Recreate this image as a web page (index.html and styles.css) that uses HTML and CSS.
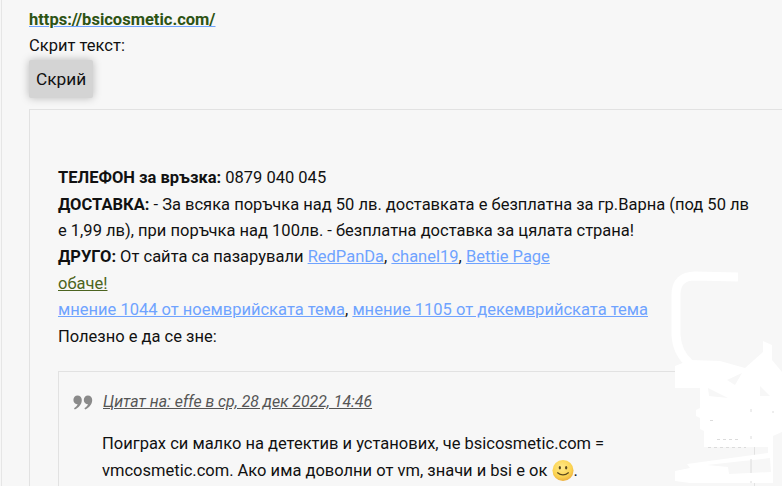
FILE: index.html
```html
<!DOCTYPE html>
<html lang="bg">
<head>
    <meta charset="UTF-8">
    <meta name="viewport" content="width=device-width, initial-scale=1.0">
    <title>Скрит текст</title>
    <link rel="stylesheet" href="styles.css">
</head>
<body>
    <div class="post">
        <a class="site-link" href="#"><b>https://bsicosmetic.com/</b></a>
        <div>Скрит текст:</div>
        <button class="spoiler-btn" type="button">Скрий</button>

        <div class="spoiler">
            <br>
            <b>ТЕЛЕФОН за връзка:</b> 0879 040 045<br>
            <b>ДОСТАВКА:</b> - За всяка поръчка над 50 лв. доставката е безплатна за гр.Варна (под 50 лв е 1,99 лв), при поръчка над 100лв. - безплатна доставка за цялата страна!<br>
            <b>ДРУГО:</b> От сайта са пазарували <a href="#">RedPanDa</a>, <a href="#">chanel19</a>, <a href="#">Bettie Page</a><br>
            <a class="olive-link" href="#">обаче!</a><br>
            <a href="#">мнение 1044 от ноемврийската тема</a>, <a href="#">мнение 1105 от декемврийската тема</a><br>
            Полезно е да се зне:

            <blockquote class="quote">
                <div class="quote-head">
                    <svg class="quote-icon" width="20" height="15" viewBox="0 0 20 15">
                        <path d="M4.5 0.5C7 0.5 8.8 2.4 8.8 5C8.8 9 6 12.8 1.8 14.5L1 13.2C3 12 4.2 10.6 4.6 9.2C2.2 9.2 0.4 7.4 0.4 4.9C0.4 2.4 2.2 0.5 4.5 0.5Z"/>
                        <path d="M14.9 0.5C17.4 0.5 19.2 2.4 19.2 5C19.2 9 16.4 12.8 12.2 14.5L11.4 13.2C13.4 12 14.6 10.6 15 9.2C12.6 9.2 10.8 7.4 10.8 4.9C10.8 2.4 12.6 0.5 14.9 0.5Z"/>
                    </svg>
                    <a class="quote-cite" href="#">Цитат на: effe в ср, 28 дек 2022, 14:46</a>
                </div>
                <div class="quote-body">
                    Поиграх си малко на детектив и установих, че bsicosmetic.com = vmcosmetic.com. Ако има доволни от vm, значи и bsi е ок
                    <svg class="smiley" width="22" height="23" viewBox="0 0 23 23">
                        <defs>
                            <radialGradient id="smileyFill" cx="45%" cy="35%" r="70%">
                                <stop offset="0" stop-color="#ffe98a"/>
                                <stop offset="0.65" stop-color="#fbd351"/>
                                <stop offset="1" stop-color="#eaa83c"/>
                            </radialGradient>
                        </defs>
                        <circle cx="11.5" cy="11.5" r="11" fill="url(#smileyFill)"/>
                        <ellipse cx="8.2" cy="8.6" rx="1.2" ry="1.9" fill="#5c4a1e"/>
                        <ellipse cx="14.8" cy="8.6" rx="1.2" ry="1.9" fill="#5c4a1e"/>
                        <path d="M5.5 13.5Q11.5 18.5 17.5 13.5" fill="none" stroke="#5c4a1e" stroke-width="1.3"/>
                    </svg>.
                </div>
            </blockquote>
        </div>
    </div>

    <!-- white marker scribble painted over the screenshot -->
    <svg class="scribble" width="782" height="486" viewBox="0 0 782 486">
        <path class="scribble-line" d="M738 277L695 276Q676 276 676 295L676 335Q677 353 690 364"/>
        <path class="scribble-fill" d="M675 366L690 360L720 361L745 368L763 352L763 341L772 345L772 360L782 372L782 432L773 436L773 483L690 483L675 481L675 471L690 468L687 464L768 453L768 447L704 447L704 431L700 429L700 418L696 416L696 410L700 408L700 388L675 388Z"/>
        <path class="scribble-hole" d="M707 465L770 458L771 472L729 474L728 467Z"/>
        <path class="scribble-hole" d="M708 388L728 398L709 396Z"/>
        <path class="scribble-hole" d="M727 380L742 373L735 385Z"/>
        <path class="scribble-hole" d="M760 386L770 396L760 396Z"/>
        <path class="scribble-mark" d="M751 409V412M751 436V439M751 459V473M751 481V483M773 411V413"/>
        <path class="scribble-mark scribble-dots" d="M708 447.5H746M717 439.5H740M710 420.5H716"/>
    </svg>
</body>
</html>
```

FILE: styles.css
```css
html {
    height: 100%;
}
body {
    margin: 0;
    height: 100%;
    background: #f7f7f7;
    color: #111;
    font-family: Roboto, "Liberation Sans", sans-serif;
    font-size: 16.5px;
    line-height: 26.4px;
}
a {
    color: #6fa3ff;
    text-decoration: underline;
}
.post {
    box-sizing: border-box;
    height: 100%;
    overflow: hidden;
    margin-left: 1px;
    padding: 7px 0 0 27px;
    border-left: 1px solid #e6e6e6;
}
.site-link b {
    color: #2d5314;
}
.olive-link {
    color: #4c6420;
}
.spoiler-btn {
    display: block;
    padding: 0 7px;
    height: 38px;
    border: none;
    border-radius: 2px;
    background: #d4d4d4;
    color: #111;
    font-family: inherit;
    font-size: 17.3px;
    box-shadow: 0 0 8px rgba(0, 0, 0, 0.25);
}
.spoiler {
    margin-top: 11px;
    padding: 29px 27px 28px 28px;
    border: 1px solid #e2e2e2;
    border-right: none;
}
.quote {
    margin: 21px 0 0;
    padding: 17px 43px 16px 14px;
    border: 1px solid #e2e2e2;
}
.quote-head {
    display: flex;
    align-items: center;
    gap: 10px;
}
.quote-icon {
    fill: #8a8a8a;
}
.quote-cite {
    color: #555;
    font-size: 15.84px;
    font-style: italic;
}
.quote-body {
    margin: 16px 0 0 29px;
}
.smiley {
    vertical-align: -6px;
}
.scribble {
    position: absolute;
    top: 0;
    left: 0;
}
.scribble-line {
    fill: none;
    stroke: #fff;
    stroke-width: 9;
}
.scribble-fill {
    fill: #fff;
}
.scribble-hole {
    fill: #f7f7f7;
}
.scribble-mark {
    fill: none;
    stroke: #dcdcdc;
    stroke-width: 1;
}
.scribble-dots {
    stroke-dasharray: 3 3;
}
```
